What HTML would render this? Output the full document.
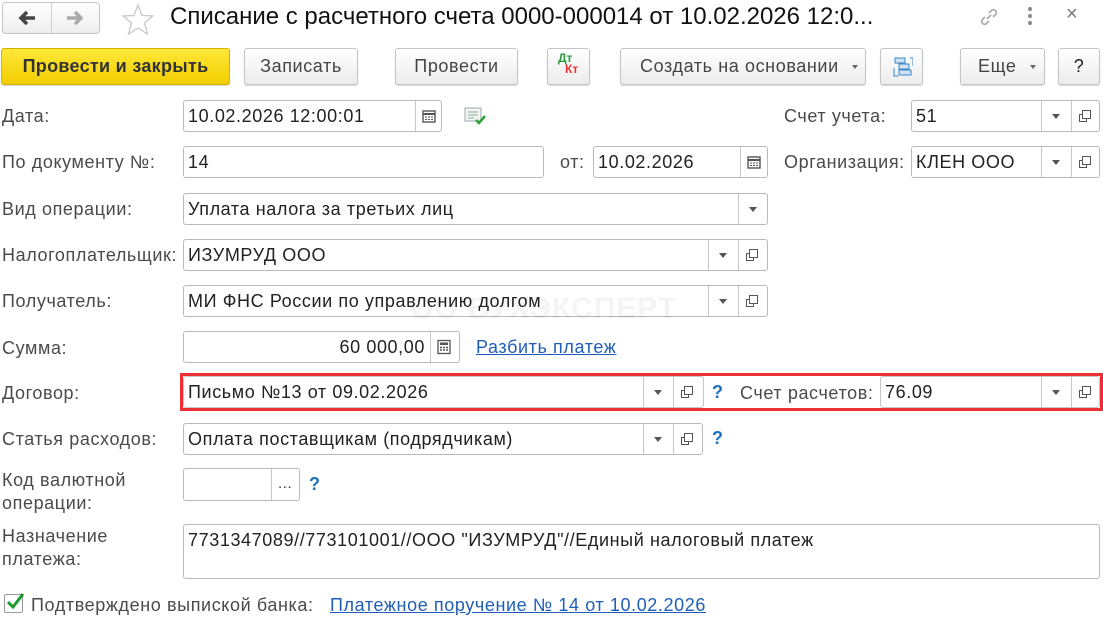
<!DOCTYPE html>
<html><head><meta charset="utf-8">
<style>
*{box-sizing:border-box;margin:0;padding:0}
body{width:1103px;height:619px;background:#fff;position:relative;overflow:hidden;font-family:"Liberation Sans",Arial,sans-serif;font-size:18px;letter-spacing:.6px;color:#222}
.a{position:absolute}
.lbl{position:absolute;color:#4a4a4a;font-size:18px;line-height:20px;white-space:nowrap}
.btn{position:absolute;top:48px;height:37px;border:1px solid #c4c4c4;border-radius:3px;background:linear-gradient(#fff,#ececec);box-shadow:0 1px 1px rgba(0,0,0,.15);color:#444;font-size:18px;line-height:35px;text-align:center;white-space:nowrap}
.f{position:absolute;height:32px;border:1px solid #b9b9b9;border-radius:3px;background:#fff;font-size:18px;line-height:30px;padding-left:4px;color:#222;white-space:nowrap;overflow:hidden}
.sep{position:absolute;top:0;bottom:0;border-left:1px solid #c6c6c6}
.dd{position:absolute;top:13px;width:0;height:0;border-left:4px solid transparent;border-right:4px solid transparent;border-top:5px solid #555}
.q{position:absolute;color:#1d6fbf;font-size:18px;font-weight:bold}
.lnk{position:absolute;color:#1f5eb8;text-decoration:underline;font-size:18px;white-space:nowrap}
</style></head><body>
<!-- nav -->
<div class="a" style="left:2px;top:2px;width:98px;height:32px;border:1px solid #c4c4c4;border-radius:4px;background:linear-gradient(#fff,#eee)"></div>
<div class="a" style="left:51px;top:3px;height:30px;border-left:1px solid #cfcfcf"></div>
<svg class="a" style="left:15px;top:8px" width="24" height="20"><path d="M20 10H6M12 4L6 10L12 16" stroke="#444" stroke-width="3.5" fill="none"/></svg>
<svg class="a" style="left:63px;top:8px" width="24" height="20"><path d="M4 10H18M12 4L18 10L12 16" stroke="#aaa" stroke-width="3.5" fill="none"/></svg>
<svg class="a" style="left:120px;top:2px" width="36" height="34"><path d="M18 3L22 13.5L33 14L24.5 21L27.5 32L18 26L8.5 32L11.5 21L3 14L14 13.5Z" fill="none" stroke="#c8c8c8" stroke-width="1.3"/></svg>
<div class="a" style="left:170px;top:2px;font-size:24px;line-height:30px;color:#111;letter-spacing:0">Списание с расчетного счета 0000-000014 от 10.02.2026 12:0...</div>
<svg class="a" style="left:977px;top:5px" width="24" height="24"><path d="M10 14L14 10M8 12L5 15a3 3 0 0 0 4 4l3-3M16 12l3-3a3 3 0 0 0-4-4l-3 3" stroke="#aaa" stroke-width="1.6" fill="none"/></svg>
<div class="a" style="left:1028px;top:7px;width:4px;height:4px;background:#888;border-radius:2px;box-shadow:0 7px 0 #888,0 14px 0 #888"></div>
<div class="a" style="left:1066px;top:3px;font-size:20px;color:#777">×</div>
<!-- toolbar -->
<div class="btn" style="left:1px;width:229px;background:linear-gradient(#ffe83a,#f2cd00);border-color:#d5b100;color:#333;font-weight:bold;letter-spacing:.3px">Провести и закрыть</div>
<div class="btn" style="left:244px;width:114px">Записать</div>
<div class="btn" style="left:395px;width:123px">Провести</div>
<div class="btn" style="left:547px;width:43px;letter-spacing:0"><span class="a" style="left:10px;top:-8px;font-size:12px;color:#2a9a3a;font-weight:bold">Дт</span><span class="a" style="left:17px;top:3px;font-size:12px;color:#e33;font-weight:bold">Кт</span></div>
<div class="btn" style="left:620px;width:246px;text-align:left;padding-left:19px">Создать на основании<span class="dd" style="left:231px;top:16px;border-width:4px 3px 0;border-top-color:#666"></span></div>
<div class="btn" style="left:880px;width:43px"><svg class="a" style="left:10px;top:6px" width="22" height="24"><rect x="4" y="3" width="10" height="5" fill="#cfe3f5" stroke="#3b86c6"/><rect x="8" y="9" width="10" height="5" fill="#cfe3f5" stroke="#3b86c6"/><rect x="8" y="15" width="12" height="5" fill="#cfe3f5" stroke="#3b86c6"/><path d="M3 13V21h4M19 3h3V11" stroke="#3b86c6" fill="none"/></svg></div>
<div class="btn" style="left:960px;width:85px;text-align:left;padding-left:17px">Еще<span class="dd" style="left:69px;top:16px;border-width:4px 3px 0;border-top-color:#666"></span></div>
<div class="btn" style="left:1058px;width:42px;color:#222">?</div>

<!-- row Дата -->
<div class="lbl" style="left:2px;top:106px">Дата:</div>
<div class="f" style="left:183px;top:100px;width:259px">10.02.2026 12:00:01<div class="sep" style="left:231px"></div>
<svg class="a" style="left:238px;top:8px" width="14" height="14"><rect x="1" y="2" width="12" height="11" fill="none" stroke="#555" stroke-width="1.4"/><path d="M1 5h12" stroke="#555" stroke-width="2"/><path d="M3 8h2M6 8h2M9 8h2M3 10.5h2M6 10.5h2M9 10.5h2" stroke="#555"/></svg></div>
<svg class="a" style="left:464px;top:106px" width="24" height="20"><rect x="1" y="2" width="16" height="13" fill="#f4f4f4" stroke="#9aa"/><path d="M4 6h10M4 9h10M4 12h6" stroke="#8a9"/><path d="M12 14l3 3 6-7" stroke="#2aa43a" stroke-width="2.5" fill="none"/></svg>
<div class="lbl" style="left:784px;top:106px">Счет учета:</div>
<div class="f" style="left:911px;top:100px;width:189px">51<div class="sep" style="left:129px"></div><div class="dd" style="left:140px"></div><div class="sep" style="left:159px"></div>
<svg class="a" style="left:166px;top:8px" width="14" height="14"><rect x="4.5" y="1.5" width="8" height="8" fill="none" stroke="#555"/><path d="M4.5 5.5H1.5V12.5H8.5V9.5" fill="none" stroke="#555"/></svg></div>

<!-- row По документу -->
<div class="lbl" style="left:2px;top:152px">По документу №:</div>
<div class="f" style="left:183px;top:146px;width:361px">14</div>
<div class="lbl" style="left:560px;top:152px">от:</div>
<div class="f" style="left:593px;top:146px;width:175px">10.02.2026<div class="sep" style="left:146px"></div>
<svg class="a" style="left:153px;top:8px" width="14" height="14"><rect x="1" y="2" width="12" height="11" fill="none" stroke="#555" stroke-width="1.4"/><path d="M1 5h12" stroke="#555" stroke-width="2"/><path d="M3 8h2M6 8h2M9 8h2M3 10.5h2M6 10.5h2M9 10.5h2" stroke="#555"/></svg></div>
<div class="lbl" style="left:784px;top:152px">Организация:</div>
<div class="f" style="left:911px;top:146px;width:189px">КЛЕН ООО<div class="sep" style="left:129px"></div><div class="dd" style="left:140px"></div><div class="sep" style="left:159px"></div>
<svg class="a" style="left:166px;top:8px" width="14" height="14"><rect x="4.5" y="1.5" width="8" height="8" fill="none" stroke="#555"/><path d="M4.5 5.5H1.5V12.5H8.5V9.5" fill="none" stroke="#555"/></svg></div>

<!-- Вид операции -->
<div class="lbl" style="left:2px;top:199px">Вид операции:</div>
<div class="f" style="left:183px;top:193px;width:585px">Уплата налога за третьих лиц<div class="sep" style="left:554px"></div><div class="dd" style="left:565px"></div></div>

<!-- Налогоплательщик -->
<div class="lbl" style="left:2px;top:245px">Налогоплательщик:</div>
<div class="f" style="left:183px;top:239px;width:585px">ИЗУМРУД ООО<div class="sep" style="left:524px"></div><div class="dd" style="left:535px"></div><div class="sep" style="left:554px"></div>
<svg class="a" style="left:561px;top:8px" width="14" height="14"><rect x="4.5" y="1.5" width="8" height="8" fill="none" stroke="#555"/><path d="M4.5 5.5H1.5V12.5H8.5V9.5" fill="none" stroke="#555"/></svg></div>

<!-- Получатель -->
<div class="lbl" style="left:2px;top:291px">Получатель:</div>
<div class="f" style="left:183px;top:285px;width:585px">МИ ФНС России по управлению долгом<div class="sep" style="left:524px"></div><div class="dd" style="left:535px"></div><div class="sep" style="left:554px"></div>
<svg class="a" style="left:561px;top:8px" width="14" height="14"><rect x="4.5" y="1.5" width="8" height="8" fill="none" stroke="#555"/><path d="M4.5 5.5H1.5V12.5H8.5V9.5" fill="none" stroke="#555"/></svg></div>
<div class="a" style="left:410px;top:292px;font-size:30px;font-weight:bold;color:rgba(0,0,0,.045);letter-spacing:1px">ОО БУХЭКСПЕРТ</div>

<!-- Сумма -->
<div class="lbl" style="left:2px;top:338px">Сумма:</div>
<div class="f" style="left:183px;top:331px;width:277px;text-align:right;padding-right:34px">60 000,00<div class="sep" style="left:246px"></div>
<svg class="a" style="left:252px;top:7px" width="16" height="16"><rect x="2" y="1.5" width="12" height="13" fill="none" stroke="#555" stroke-width="1.3"/><rect x="4" y="3.5" width="8" height="2.5" fill="#555"/><path d="M4 8.5h2M7 8.5h2M10 8.5h2M4 11h2M7 11h2M10 11h2" stroke="#555" stroke-width="1.5"/></svg></div>
<div class="lnk" style="left:476px;top:337px">Разбить платеж</div>

<!-- Договор -->
<div class="lbl" style="left:2px;top:383px">Договор:</div>
<div class="f" style="left:183px;top:376px;width:521px;border-color:#c6c6c6">Письмо №13 от 09.02.2026<div class="sep" style="left:459px"></div><div class="dd" style="left:470px"></div><div class="sep" style="left:489px"></div>
<svg class="a" style="left:496px;top:8px" width="14" height="14"><rect x="4.5" y="1.5" width="8" height="8" fill="none" stroke="#555"/><path d="M4.5 5.5H1.5V12.5H8.5V9.5" fill="none" stroke="#555"/></svg></div>
<div class="q" style="left:712px;top:382px">?</div>
<div class="lbl" style="left:740px;top:383px">Счет расчетов:</div>
<div class="f" style="left:880px;top:376px;width:220px;border-color:#c6c6c6">76.09<div class="sep" style="left:160px"></div><div class="dd" style="left:171px"></div><div class="sep" style="left:190px"></div>
<svg class="a" style="left:197px;top:8px" width="14" height="14"><rect x="4.5" y="1.5" width="8" height="8" fill="none" stroke="#555"/><path d="M4.5 5.5H1.5V12.5H8.5V9.5" fill="none" stroke="#555"/></svg></div>
<div class="a" style="left:180px;top:373px;width:923px;height:38px;border:3px solid #ec2f35"></div>

<!-- Статья расходов -->
<div class="lbl" style="left:2px;top:429px">Статья расходов:</div>
<div class="f" style="left:183px;top:423px;width:520px">Оплата поставщикам (подрядчикам)<div class="sep" style="left:459px"></div><div class="dd" style="left:470px"></div><div class="sep" style="left:489px"></div>
<svg class="a" style="left:496px;top:8px" width="14" height="14"><rect x="4.5" y="1.5" width="8" height="8" fill="none" stroke="#555"/><path d="M4.5 5.5H1.5V12.5H8.5V9.5" fill="none" stroke="#555"/></svg></div>
<div class="q" style="left:712px;top:428px">?</div>

<!-- Код валютной -->
<div class="lbl" style="left:2px;top:469px;line-height:23px">Код валютной<br>операции:</div>
<div class="f" style="left:183px;top:468px;width:117px;height:33px"><div class="sep" style="left:87px"></div><div class="a" style="left:94px;top:0;font-size:15px;color:#333">...</div></div>
<div class="q" style="left:309px;top:474px">?</div>

<!-- Назначение -->
<div class="lbl" style="left:2px;top:525px;line-height:23px">Назначение<br>платежа:</div>
<div class="f" style="left:183px;top:524px;width:917px;height:55px;line-height:20px;padding-top:5px">7731347089//773101001//ООО "ИЗУМРУД"//Единый налоговый платеж</div>

<!-- checkbox -->
<div class="a" style="left:4px;top:594px;width:19px;height:19px;border:1px solid #999;border-radius:2px;background:#fff"></div>
<svg class="a" style="left:4px;top:590px" width="22" height="22"><path d="M4 12l5 5L19 4" stroke="#1f9a2e" stroke-width="3" fill="none"/></svg>
<div class="lbl" style="left:31px;top:595px">Подтверждено выпиской банка:</div>
<div class="lnk" style="left:330px;top:595px">Платежное поручение № 14 от 10.02.2026</div>
</body></html>
